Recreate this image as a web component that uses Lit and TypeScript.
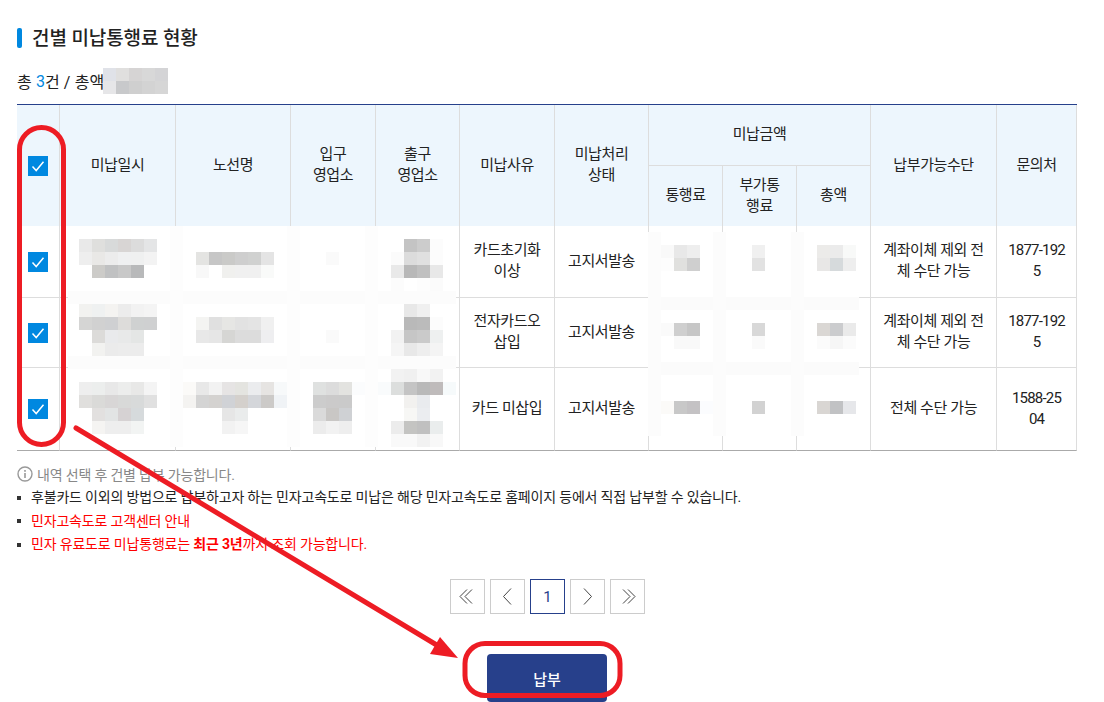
import { LitElement, html, css, svg } from "lit";
import { customElement } from "lit/decorators.js";

type Block = [number, number, string];
const P = 13;
const blocks: Block[] = [
  [103,68,"e0e2e8 e0dfde d6d4d4 d8d8d8 d4d4d6"],[103,81,"e6e6e8 c8c9cb cfcfcf d3d3d3 d6d6d6"],
  [79,239,"e9e9e9 dfdfdd d8dada d8d5d4 dcdcdc e4e5e6"],[79,252,"eeeeee e9e8e6 ececec eff0f1 eff0f0 f3f3f3"],[92,265,"cccbc8 c0c1c2 c8c8c8 b8b9ba"],
  [79,304,"f2f2f0 eff1f1 f4f3f1 ececec f2f2f2 f4f4f4"],[79,317,"d5d5d4 d1d1d1 cfd0d2 dddcda cfd1d1 cfd0d1"],[92,330,"dcdbd9 e9eaec e8e9e9 e4e6e5"],[92,343,"f2f2f0 ebebeb ececec ececec"],
  [79,382,"eeeeee eceeed e8e8e8 ecedec e8e8e7 f4f4f4"],[79,395,"e0dfdd dadad8 d8d6d6 d8d9d8 d8dada e0e0e0"],[92,408,"e2e0df e2e4e4 d6d2d3 d6dadc"],[92,421,"f5f4f2 eeeeee eeeeee f2f4f3"],
  [196,252,"e4e4e2 c6c6c6 cacac8 cecece d0d1d0 e4e4e4"],[196,265,"f8f8f8 ffffff f0f0ee f0f0f0 f0f0f0 f9faf9"],
  [196,317,"f4f4f2 e0e0e0 e6e6e4 e2e2e2 e4e4e4 f0f0f0"],[196,330,"e8e8e8 e6e6e6 d6d6d4 dcdcdc dcdcdc eeeef0"],
  [183,382,"fbfaf8 e8e8e8 f2f2f2 e6e4e4 e4e4e0 ebecee e6e4e2 f7f9fa"],[183,395,"f4f3f1 d4d4d4 d4d2d0 d0d2d6 d4d0cc d4d6da cccac8 f0f3f6"],[222,408,"e6e6e6 eaecec"],[222,421,"f2f2f2 f6f6f6"],
  [326,252,"fafafa"],[326,330,"fafafa"],
  [313,382,"dfe1e0 dcdcdc e3e3e0 fbfcfd"],[313,395,"cccccc cbcaca cacaca"],[313,408,"dadada c9c7c5 cfd1d4"],[313,421,"ececec f2f2f2 eeeeee"],
  [404,239,"c4c4c4 cccccc fcfcfc"],[391,252,"fbfbfb dcdcdc e0e0e0 fcfcfc"],[391,265,"e9e9e9 b8b8b8 c0c0c0 e8e8e8"],[391,278,"fcfcfc ffffff fdfdfd fbfbfb"],
  [404,304,"e8e8e8 f0f0f0"],[404,317,"b9b9b9 bbbbbb fcfcfc"],[391,330,"f2f2f2 c6c6c6 cacaca eef0f0"],[391,343,"f5f5f5 e8e8e8 eeeeee f4f4f4"],
  [391,369,"f2f2f2 f0f0f0 f8f8f8 f2f2f2"],[378,382,"f9fbfc dcdedd c4c4c4 b9b9b9 bfbbbb f6fafb"],[404,395,"f2f1ef e9ebee"],[404,408,"f7f7f5 ebedf0"],[391,421,"ececec c4c4c2 c0c0c0 eaeded"],[391,434,"f9f9f9 f9f9f9 f2f2f2 f8f8f8"],
  [661,245,"f9f9f9 e8e8e8 eeeeee"],[752,245,"f0f0f0"],[817,245,"ecebe9 ebebeb f8f9f8"],
  [661,258,"fdfdfd e0e0de cfcfcf"],[752,258,"e2e2e2"],[817,258,"e8e7e6 d6dadc eeeeee"],
  [661,323,"fafafa cfcfcf c6c6c6"],[752,323,"d8d8d8"],[817,323,"dad7d4 cbccce eaeaea"],
  [674,336,"f9f9f9 f9f9f9"],[752,336,"fafafa"],[817,336,"fbfbfb f6f6f6 fbfbfb"],
  [661,401,"fbfaf8 c8c8c8 c4c2c4 fbfcfe"],[752,401,"d2d2d2"],[817,401,"d9d6d3 c1c2c4 e6e7ea"],
];
const mask: [number, number, number, number, string][] = [
  [68,226,388,221,"#ffffff"],
  [68,291,388,13,"#fcfcfc"],[68,356,388,13,"#fcfcfc"],
  [170,226,13,221,"#fdfdfd"],[287,226,13,221,"#fdfdfd"],[365,226,13,221,"#fdfdfd"],
  [648,232,211,204,"#ffffff"],
  [648,297,211,13,"#fbfbfb"],[648,362,211,13,"#fbfbfb"],
  [648,232,13,204,"#fcfcfc"],[713,232,13,204,"#fcfcfc"],[791,232,13,204,"#fcfcfc"],
];

type Row = { cls: string; reason: string; pay: string; tel: string[] };
const rows: Row[] = [
  { cls: "r1", reason: "카드초기화 이상", pay: "계좌이체 제외 전체 수단 가능", tel: ["1877-192", "5"] },
  { cls: "r2", reason: "전자카드오 삽입", pay: "계좌이체 제외 전체 수단 가능", tel: ["1877-192", "5"] },
  { cls: "r3", reason: "카드 미삽입", pay: "전체 수단 가능", tel: ["1588-25", "04"] },
];

const check = html`<span class="check"><svg width="14" height="14" viewBox="0 0 14 14"><path d="M1.5 7.5 5.2 11.5 12.5 2.8" fill="none" stroke="#fff" stroke-width="1.5"/></svg></span>`;

const chev = (paths: string[]) => html`<svg width="33" height="33" viewBox="0 0 33 33">${paths.map((d) => svg`<path d=${d} fill="none" stroke="#444" stroke-width="1"/>`)}</svg>`;

@customElement("app-root")
export class AppRoot extends LitElement {
  static styles = css`
    :host { display: block; position: relative; width: 1104px; height: 702px; overflow: hidden; background: #fff; font-family: Roboto, "Noto Sans CJK KR", sans-serif; color: #222; }
    .page { display: flex; flex-direction: column; padding: 28px 0 0 17px; }
    .title { display: flex; align-items: center; gap: 10px; height: 20px; font-size: 19px; font-weight: 500; color: #222; letter-spacing: -0.1px; }
    .title i { width: 5px; height: 20px; border-radius: 2px; background: #0088e0; }
    .title span { padding-bottom: 3px; }
    .count { height: 26px; margin-top: 20px; display: flex; align-items: center; font-size: 16px; letter-spacing: 0.1px; white-space: pre; }
    .count b { font-weight: 400; color: #0088e0; }
    table { margin-top: 10px; width: 1060px; table-layout: fixed; border-collapse: separate; border-spacing: 0; border-top: 1px solid #26408b; font-size: 15px; line-height: 21px; letter-spacing: -0.4px; }
    th, td { box-sizing: border-box; padding: 0 10px 1px; text-align: center; vertical-align: middle; border-right: 1px solid #ddd; word-break: break-all; }
    th { background: #edf6fd; font-weight: 400; color: #222; }
    tr.h1 { height: 61px; } tr.h2 { height: 60px; }
    th.sub { border-bottom: 1px solid #ddd; }
    tr.r1 { height: 72px; } tr.r2 { height: 70px; } tr.r3 { height: 83px; }
    td { border-bottom: 1px solid #ddd; color: #222; }
    tr.r3 td { border-bottom-color: #aaa; }
    .c { padding: 0 0 1px; }
    .k { padding: 0 0 1px; }
    td.tel { padding: 0 0 1px; white-space: nowrap; letter-spacing: -0.8px; }
    .check { display: inline-flex; align-items: center; justify-content: center; width: 20px; height: 20px; background: #0088e0; vertical-align: middle; margin-left: -1px; }
    .info { margin-top: 12px; height: 21px; display: flex; align-items: center; gap: 4px; font-size: 14px; letter-spacing: -0.18px; color: #888; }
    ul { margin: 3px 0 0; padding: 0; list-style: none; display: flex; flex-direction: column; gap: 2.5px; font-size: 14px; line-height: 21px; letter-spacing: -0.18px; }
    li { display: flex; align-items: center; gap: 10px; }
    li::before { content: ""; width: 4px; height: 4px; background: #333; }
    .red { color: #f00; }
    .red b { font-weight: 700; }
    .pager { width: 1060px; margin-top: 24px; display: flex; justify-content: center; gap: 5px; padding-left: 1px; box-sizing: border-box; }
    .pager span { box-sizing: border-box; width: 35px; height: 35px; border: 1px solid #ccc; display: flex; align-items: center; justify-content: center; font-size: 15px; color: #26408b; background: #fff; }
    .pager span.on { border-color: #26408b; }
    .btn { align-self: flex-start; margin: 40px 0 0 470px; width: 120px; height: 48px; border-radius: 4px; background: #27408b; color: #fff; display: flex; align-items: center; justify-content: center; font-size: 15px; font-weight: 500; }
    .overlay { position: absolute; left: 0; top: 0; pointer-events: none; }
  `;

  render() {
    return html`
      <div class="page">
        <div class="title"><i></i><span>건별 미납통행료 현황</span></div>
        <div class="count">총 <b>3</b>건 / 총액</div>
        <table>
          <colgroup>
            ${[43, 116, 115, 85, 84, 95, 94, 74, 74, 74, 126, 80].map((w) => html`<col width=${w} />`)}
          </colgroup>
          <thead>
            <tr class="h1">
              <th class="k" rowspan="2">${check}</th>
              <th rowspan="2">미납일시</th>
              <th rowspan="2">노선명</th>
              <th rowspan="2">입구<br />영업소</th>
              <th rowspan="2">출구<br />영업소</th>
              <th rowspan="2">미납사유</th>
              <th rowspan="2">미납처리<br />상태</th>
              <th colspan="3" class="sub">미납금액</th>
              <th rowspan="2">납부가능수단</th>
              <th rowspan="2">문의처</th>
            </tr>
            <tr class="h2">
              <th>통행료</th>
              <th class="c">부가통<br />행료</th>
              <th>총액</th>
            </tr>
          </thead>
          <tbody>
            ${rows.map((r) => html`
              <tr class=${r.cls}>
                <td class="k">${check}</td>
                <td></td><td></td><td></td><td></td>
                <td>${r.reason}</td>
                <td class="c">고지서발송</td>
                <td></td><td></td><td></td>
                <td>${r.pay}</td>
                <td class="tel">${r.tel[0]}<br />${r.tel[1]}</td>
              </tr>`)}
          </tbody>
        </table>
        <div class="info">
          <svg width="16" height="16" viewBox="0 0 16 16"><circle cx="8" cy="8" r="7" fill="none" stroke="#999" stroke-width="1.4"/><rect x="7.2" y="7" width="1.6" height="5" fill="#999"/><rect x="7.2" y="4" width="1.6" height="1.8" fill="#999"/></svg>
          내역 선택 후 건별 납부 가능합니다.
        </div>
        <ul>
          <li>후불카드 이외의 방법으로 납부하고자 하는 민자고속도로 미납은 해당 민자고속도로 홈페이지 등에서 직접 납부할 수 있습니다.</li>
          <li class="red">민자고속도로 고객센터 안내</li>
          <li class="red"><span>민자 유료도로 미납통행료는 <b>최근 3년</b>까지 조회 가능합니다.</span></li>
        </ul>
        <div class="pager">
          <span>${chev(["M16 9.5 9 16.5 16 23.5", "M21 9.5 14 16.5 21 23.5"])}</span>
          <span>${chev(["M20 8.5 12.5 16.5 20 24.5"])}</span>
          <span class="on">1</span>
          <span>${chev(["M13 8.5 20.5 16.5 13 24.5"])}</span>
          <span>${chev(["M12 9.5 19 16.5 12 23.5", "M17 9.5 24 16.5 17 23.5"])}</span>
        </div>
        <div class="btn">납부</div>
      </div>
      <svg class="overlay" width="1104" height="702" viewBox="0 0 1104 702">
        <g shape-rendering="crispEdges">
          ${mask.map(([x, y, w, h, c]) => svg`<rect x=${x} y=${y} width=${w} height=${h} fill=${c} />`)}
          ${blocks.flatMap(([x, y, cs]) => cs.split(" ").map((c, i) => svg`<rect x=${x + i * P} y=${y} width=${P} height=${P} fill=${"#" + c} />`))}
        </g>
        <rect x="19.5" y="127.5" width="44" height="317" rx="22" fill="none" stroke="#ed1c24" stroke-width="5" />
        <rect x="465" y="643.5" width="155" height="52" rx="20" fill="none" stroke="#ed1c24" stroke-width="5" />
        <path d="M76 428 440 647" fill="none" stroke="#ed1c24" stroke-width="5" stroke-linecap="round" />
        <path d="M458 658 430 654 440 637Z" fill="#ed1c24" />
      </svg>
    `;
  }
}
